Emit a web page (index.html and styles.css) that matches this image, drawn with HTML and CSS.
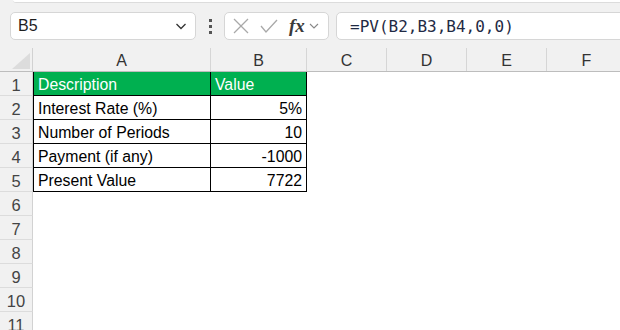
FILE: index.html
```html
<!DOCTYPE html>
<html lang="en">

<head>
    <meta charset="UTF-8">
    <title>PV</title>
    <link rel="stylesheet" href="styles.css">
</head>

<body>
    <div class="top-edge"></div>

    <div class="formula-bar">
        <div class="name-box">
            <span>B5</span>
            <svg class="chev" width="12" height="8" viewBox="0 0 12 8"><polyline points="1.5,2 6,6.5 10.5,2" /></svg>
        </div>
        <div class="dots"><span></span><span></span><span></span></div>
        <div class="fx-box">
            <svg class="ico" width="18" height="18" viewBox="0 0 18 18"><line x1="2" y1="2" x2="16" y2="16" /><line x1="16" y1="2" x2="2" y2="16" /></svg>
            <svg class="ico" width="20" height="18" viewBox="0 0 20 18"><polyline points="2,9 7,15 18,3" /></svg>
            <span class="fx">fx</span>
            <svg class="chev light" width="10" height="8" viewBox="0 0 10 8"><polyline points="1,2 5,6 9,2" /></svg>
        </div>
        <div class="formula-input">=PV(B2,B3,B4,0,0)</div>
    </div>

    <div class="sheet">
        <div class="row col-heads">
            <div class="rh corner"><div class="tri"></div></div>
            <div class="ch a">A</div>
            <div class="ch b">B</div>
            <div class="ch">C</div>
            <div class="ch">D</div>
            <div class="ch">E</div>
            <div class="ch">F</div>
        </div>

        <div class="row">
            <div class="rh">1</div>
            <div class="cell a head">Description</div>
            <div class="cell b head">Value</div>
        </div>
        <div class="row">
            <div class="rh">2</div>
            <div class="cell a">Interest Rate (%)</div>
            <div class="cell b num">5%</div>
        </div>
        <div class="row">
            <div class="rh">3</div>
            <div class="cell a">Number of Periods</div>
            <div class="cell b num">10</div>
        </div>
        <div class="row">
            <div class="rh">4</div>
            <div class="cell a">Payment (if any)</div>
            <div class="cell b num">-1000</div>
        </div>
        <div class="row">
            <div class="rh">5</div>
            <div class="cell a">Present Value</div>
            <div class="cell b num">7722</div>
        </div>
        <div class="row"><div class="rh">6</div></div>
        <div class="row"><div class="rh">7</div></div>
        <div class="row"><div class="rh">8</div></div>
        <div class="row"><div class="rh">9</div></div>
        <div class="row"><div class="rh">10</div></div>
        <div class="row"><div class="rh">11</div></div>
    </div>
</body>

</html>
```

FILE: styles.css
```css
*{
    margin: 0;
    padding: 0;
    box-sizing: border-box;
}
body{
    width: 620px;
    height: 330px;
    overflow: hidden;
    background-color: #f1f1f1;
    font-family: 'Liberation Sans', Arial, sans-serif;
    color: #222;
}
.top-edge{
    height: 3px;
    margin-left: 13px;
    background-color: #fff;
    border-bottom: 1px solid #dcdcdc;
    border-bottom-left-radius: 6px;
}

/* formula bar */
.formula-bar{
    display: flex;
    align-items: center;
    padding: 9px 0 0 10px;
    height: 37px;
}
.name-box{
    width: 186px;
    height: 28px;
    display: flex;
    align-items: center;
    justify-content: space-between;
    padding: 0 8px 0 7px;
    background-color: #fff;
    border: 1px solid #d6d6d6;
    border-radius: 5px;
    font-size: 16px;
    color: #1e1e1e;
}
.chev polyline{
    fill: none;
    stroke: #333;
    stroke-width: 1.3;
}
.chev.light polyline{
    stroke: #888;
    stroke-width: 1.1;
}
.dots{
    display: flex;
    flex-direction: column;
    gap: 3px;
    margin: 0 12px 0 13px;
}
.dots span{
    width: 3px;
    height: 3px;
    background-color: #555;
}
.fx-box{
    width: 105px;
    height: 28px;
    display: flex;
    align-items: center;
    gap: 9px;
    padding-left: 7px;
    background-color: #fff;
    border: 1px solid #d6d6d6;
    border-radius: 5px;
}
.ico line, .ico polyline{
    fill: none;
    stroke: #a9a9a9;
    stroke-width: 1.3;
}
.fx{
    font-family: 'Liberation Serif', 'Times New Roman', serif;
    font-style: italic;
    font-weight: bold;
    font-size: 19px;
    color: #3a3a3a;
    margin-left: 1px;
    margin-right: -5px;
}
.formula-input{
    flex: 1;
    height: 28px;
    margin-left: 7px;
    margin-right: -10px;
    padding-left: 13px;
    display: flex;
    align-items: center;
    background-color: #fff;
    border: 1px solid #d6d6d6;
    border-radius: 5px;
    font-family: 'DejaVu Sans Mono', 'Liberation Mono', monospace;
    font-size: 16px;
    color: #1f2a44;
}

/* sheet */
.sheet{
    margin-top: 8px;
    background-color: #fff;
}
.row{
    display: flex;
    height: 24px;
}
.col-heads{
    background-color: #f1f1f1;
    border-bottom: 1px solid #bdbdbd;
}
.rh{
    width: 33px;
    height: 24px;
    flex: none;
    background-color: #f1f1f1;
    border-right: 1px solid #d2d2d2;
    border-bottom: 1px solid #dcdcdc;
    text-align: center;
    font-size: 16.5px;
    line-height: 26px;
    color: #444;
}
.corner{
    height: 23px;
    border-bottom: none;
    display: flex;
    justify-content: flex-end;
    align-items: flex-end;
    padding: 0 2px 2px 0;
}
.tri{
    width: 18px;
    height: 16px;
    background-color: #dcdcdc;
    clip-path: polygon(100% 0, 100% 100%, 0 100%);
}
.ch{
    width: 80px;
    flex: none;
    border-right: 1px solid #d6d6d6;
    text-align: center;
    font-size: 16px;
    line-height: 25px;
    color: #333;
}
.ch.a{
    width: 178px;
}
.ch.b{
    width: 96px;
}
.cell{
    flex: none;
    display: flex;
    align-items: flex-end;
    padding: 0 4px 1px 4px;
    border-right: 1px solid #000;
    border-bottom: 1px solid #000;
    font-size: 15.8px;
    line-height: 18px;
    color: #000;
    white-space: nowrap;
}
.cell.a{
    width: 178px;
    border-left: 1px solid #000;
}
.cell.b{
    width: 96px;
}
.cell.num{
    justify-content: flex-end;
}
.cell.head{
    background-color: #00b050;
    color: #fff;
}
```
